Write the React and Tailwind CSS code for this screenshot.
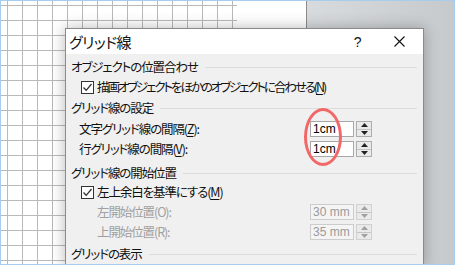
import React from 'react';

const jp = { fontFamily: '"Noto Sans CJK JP", "Noto Sans", sans-serif' };

const Header = ({ text, className = '' }) => (
  <div className={`flex items-center h-[20px] pl-[5px] pr-[6px] ${className}`}>
    <span className="whitespace-nowrap">{text}</span>
    <div className="flex-1 h-px bg-[#dcdcdc] ml-[7px]" />
  </div>
);

const Check = () => (
  <div className="w-[13px] h-[13px] border border-[#333] bg-white flex items-center justify-center shrink-0">
    <svg width="11" height="11" viewBox="0 0 11 11">
      <path d="M1.5 5.5 L4.2 8.3 L9.5 2" fill="none" stroke="#333" strokeWidth="1.3" />
    </svg>
  </div>
);

const Key = ({ k }) => (
  <span>
    (<span className="underline underline-offset-2">{k}</span>)
  </span>
);

const Spin = ({ disabled }) => (
  <div className={`flex flex-col w-[16px] h-[16px] border ${disabled ? 'border-[#d0d0d0]' : 'border-[#adadad]'} bg-[#eaeaea]`}>
    <div className="flex-1 flex items-center justify-center border-b border-[#c4c4c4]">
      <svg width="7" height="4" viewBox="0 0 7 4">
        <path d="M0 4 L3.5 0 L7 4Z" fill={disabled ? '#a0a0a0' : '#222'} />
      </svg>
    </div>
    <div className="flex-1 flex items-center justify-center">
      <svg width="7" height="4" viewBox="0 0 7 4">
        <path d="M0 0 L3.5 4 L7 0Z" fill={disabled ? '#a0a0a0' : '#222'} />
      </svg>
    </div>
  </div>
);

const Field = ({ value, disabled }) => (
  <div className="flex items-center gap-[2px]">
    <div
      className={`w-[44px] h-[16px] border flex items-center pl-[2px] text-[12px] leading-none tracking-normal ${
        disabled ? 'border-[#cccccc] bg-[#f4f4f4] text-[#9a9a9a]' : 'border-[#a8a8a8] bg-white text-black'
      }`}
      style={{ fontFamily: '"Liberation Sans", Arial, sans-serif' }}
    >
      {value}
    </div>
    <Spin disabled={disabled} />
  </div>
);

const Row = ({ label, value, disabled, indent }) => (
  <div className="flex items-center h-[20px]">
    <span className={`${indent} whitespace-nowrap ${disabled ? 'text-[#a0a0a0]' : ''}`}>{label}</span>
    <div className="ml-auto mr-[51px]">
      <Field value={value} disabled={disabled} />
    </div>
  </div>
);

export default function App() {
  return (
    <div
      className="relative w-[455px] h-[265px] border border-[#a6cdee] overflow-hidden flex bg-[#cbced2] [font-feature-settings:'palt']"
      style={jp}
    >
      {/* document page */}
      <div className="w-[306px] h-full bg-white flex border-r border-[#8c8c8c]">
        <div className="w-[236px] h-full bg-[linear-gradient(to_right,#b9b9b9_1px,transparent_1px),linear-gradient(to_bottom,#b9b9b9_1px,transparent_1px)] bg-[size:15px_15px] bg-[position:6px_4px]" />
      </div>
      <div className="flex-1 h-full bg-[linear-gradient(to_right,#d8dbde,#c6cacd)]" />

      {/* dialog window */}
      <div className="absolute left-[64px] top-[27px] w-[359px] h-[240px] border border-[#8a8a8a] bg-[#f0f0f0] shadow-[0_0_14px_rgba(0,0,0,0.28)] flex flex-col text-[12.5px] tracking-[-1.1px] text-[#111]">
        <div className="h-[25px] bg-white flex items-center pl-[3px] shrink-0">
          <span className="text-[15px] leading-none tracking-[-0.5px]">グリッド線</span>
          <span className="ml-auto w-[20px] text-center text-[14px] leading-none" style={{ fontFamily: '"Liberation Sans", Arial, sans-serif' }}>?</span>
          <svg className="ml-[27px] mr-[18px]" width="11" height="11" viewBox="0 0 11 11">
            <path d="M0.5 0.5 L10.5 10.5 M10.5 0.5 L0.5 10.5" stroke="#111" strokeWidth="1.1" />
          </svg>
        </div>

        <div className="flex flex-col pt-[3px]">
          <Header text="オブジェクトの位置合わせ" />
          <div className="flex items-center h-[21px] pl-[15px] gap-[3px]">
            <Check />
            <span className="whitespace-nowrap tracking-[-2.1px]">描画オブジェクトをほかのオブジェクトに合わせる<Key k="N" /></span>
          </div>
          <Header text="グリッド線の設定" className="h-[21px]" />
          <Row label={<>文字グリッド線の間隔<Key k="Z" />:</>} value="1cm" indent="pl-[13px]" />
          <Row label={<>行グリッド線の間隔<Key k="V" />:</>} value="1cm" indent="pl-[13px]" />
          <Header text="グリッド線の開始位置" className="mt-[4px]" />
          <div className="flex items-center h-[19px] pl-[15px] gap-[3px]">
            <Check />
            <span className="whitespace-nowrap">左上余白を基準にする<Key k="M" /></span>
          </div>
          <Row label="左開始位置(O):" value="30 mm" disabled indent="pl-[31px]" />
          <Row label="上開始位置(R):" value="35 mm" disabled indent="pl-[31px]" />
          <Header text="グリッドの表示" className="mt-[2px]" />
        </div>
      </div>

      {/* red annotation circle */}
      <div className="absolute left-[303px] top-[107px] w-[38px] h-[58px] rounded-[50%] border-[3px] border-[#f26868]" />
    </div>
  );
}
